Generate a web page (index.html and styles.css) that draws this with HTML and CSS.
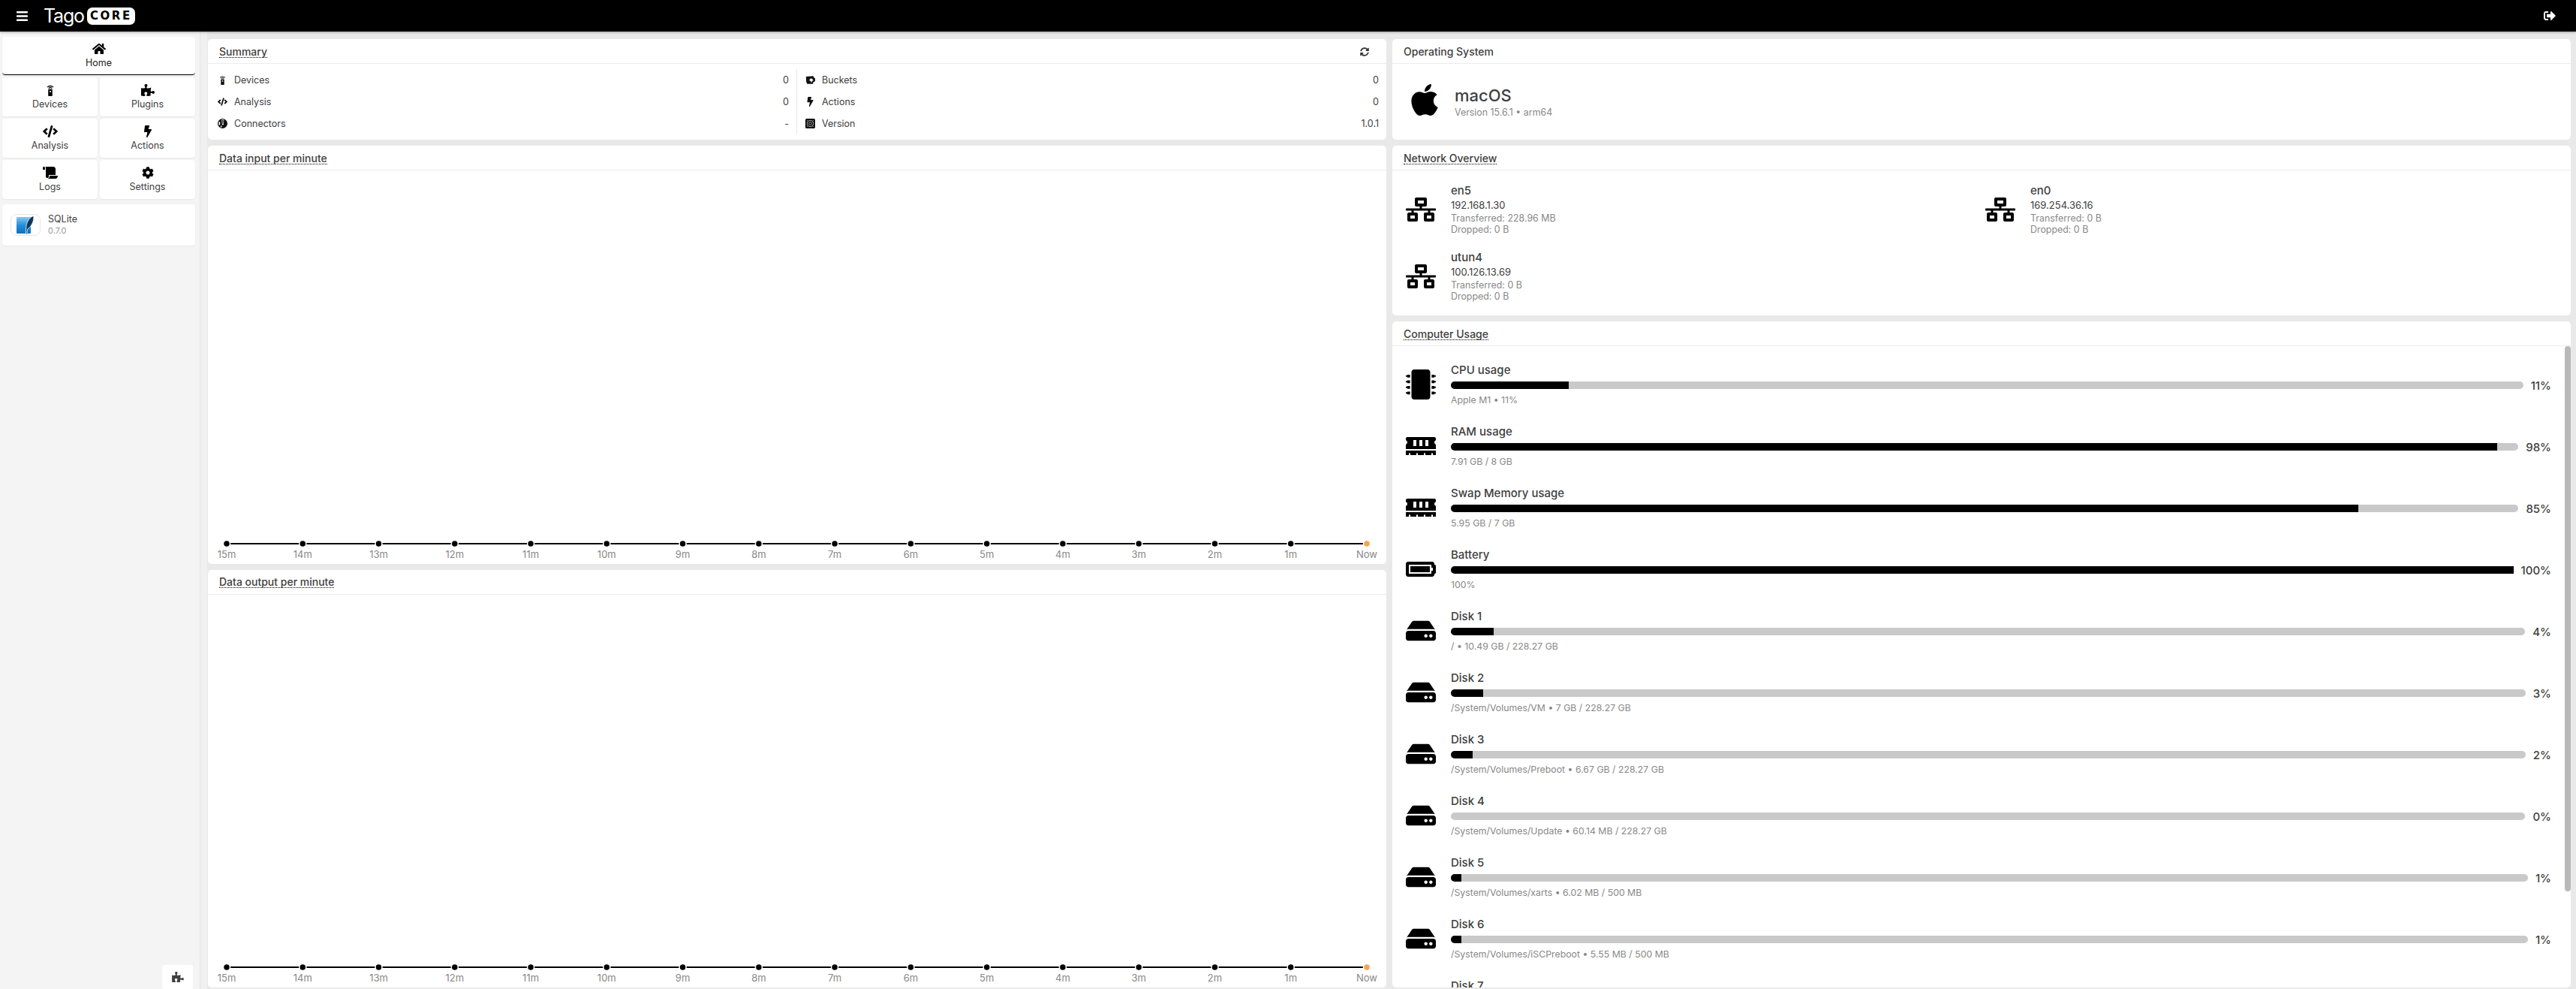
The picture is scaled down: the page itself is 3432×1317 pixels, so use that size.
FILE: index.html
```html
<!DOCTYPE html>
<html lang="en">
<head>
    <meta charset="UTF-8">
    <title>TagoCore</title>
    <link rel="stylesheet" href="styles.css">
</head>
<body>
    <!-- icon sprite -->
    <svg class="sprite" xmlns="http://www.w3.org/2000/svg">
        <symbol id="i-bars" viewBox="0 0 448 512"><path d="M16 132h416c8.837 0 16-7.163 16-16V76c0-8.837-7.163-16-16-16H16C7.163 60 0 67.163 0 76v40c0 8.837 7.163 16 16 16zm0 160h416c8.837 0 16-7.163 16-16v-40c0-8.837-7.163-16-16-16H16c-8.837 0-16 7.163-16 16v40c0 8.837 7.163 16 16 16zm0 160h416c8.837 0 16-7.163 16-16v-40c0-8.837-7.163-16-16-16H16c-8.837 0-16 7.163-16 16v40c0 8.837 7.163 16 16 16z"/></symbol>
        <symbol id="i-home" viewBox="0 0 576 512"><path d="M280.37 148.26L96 300.11V464a16 16 0 0 0 16 16l112.06-.29a16 16 0 0 0 15.92-16V368a16 16 0 0 1 16-16h64a16 16 0 0 1 16 16v95.64a16 16 0 0 0 16 16.05L464 480a16 16 0 0 0 16-16V300L295.67 148.26a12.19 12.19 0 0 0-15.3 0zM571.6 251.47L488 182.56V44.05a12 12 0 0 0-12-12h-56a12 12 0 0 0-12 12v72.61L318.47 43a48 48 0 0 0-61 0L4.34 251.47a12 12 0 0 0-1.6 16.9l25.5 31A12 12 0 0 0 45.15 301l235.22-193.74a12.19 12.19 0 0 1 15.3 0L530.9 301a12 12 0 0 0 16.9-1.6l25.5-31a12 12 0 0 0-1.7-16.93z"/></symbol>
        <symbol id="i-code" viewBox="0 0 640 512"><path d="M278.9 511.5l-61-17.7c-6.4-1.8-10-8.5-8.2-14.9L346.2 8.7c1.8-6.4 8.5-10 14.9-8.2l61 17.7c6.4 1.8 10 8.5 8.2 14.9L293.8 503.3c-1.9 6.4-8.5 10.1-14.9 8.2zm-114-112.2l43.5-46.4c4.6-4.9 4.3-12.7-.8-17.2L117 256l90.6-79.7c5.1-4.5 5.5-12.3.8-17.2l-43.5-46.4c-4.5-4.8-12.1-5.1-17-.5L3.8 247.2c-5.1 4.7-5.1 12.8 0 17.5l144.1 135.1c4.9 4.6 12.5 4.4 17-.5zm327.2.6l144.1-135.1c5.1-4.7 5.1-12.8 0-17.5L492.1 112.1c-4.8-4.5-12.4-4.3-17 .5L431.6 159c-4.6 4.9-4.3 12.7.8 17.2L523 256l-90.6 79.7c-5.1 4.5-5.5 12.3-.8 17.2l43.5 46.4c4.5 4.9 12.1 5.1 17 .6z"/></symbol>
        <symbol id="i-bolt" viewBox="0 0 320 512"><path d="M296 160H180.6l42.6-129.8C227.2 15 215.7 0 200 0H56C44 0 33.8 8.9 32.2 20.8l-32 240C-1.7 275.2 9.5 288 24 288h118.7L96.6 482.5c-3.6 15.2 8 29.5 23.3 29.5 8.4 0 16.4-4.4 20.8-12l176-304c9.3-15.9-2.2-36-20.7-36z"/></symbol>
        <symbol id="i-cog" viewBox="0 0 512 512"><path d="M487.4 315.7l-42.6-24.6c4.3-23.2 4.3-47 0-70.2l42.6-24.6c4.9-2.8 7.1-8.6 5.5-14-11.1-35.6-30-67.8-54.7-94.6-3.8-4.1-10-5.1-14.8-2.3L380.8 110c-17.9-15.4-38.5-27.3-60.8-35.1V25.8c0-5.6-3.9-10.5-9.4-11.7-36.7-8.2-74.3-7.8-109.2 0-5.5 1.2-9.4 6.1-9.4 11.7V75c-22.2 7.9-42.8 19.8-60.8 35.1L88.7 85.5c-4.9-2.8-11-1.9-14.8 2.3-24.7 26.7-43.6 58.9-54.7 94.6-1.7 5.4.6 11.2 5.5 14L67.3 221c-4.3 23.2-4.3 47 0 70.2l-42.6 24.6c-4.9 2.8-7.1 8.6-5.5 14 11.1 35.6 30 67.8 54.7 94.6 3.8 4.1 10 5.1 14.8 2.3l42.6-24.6c17.9 15.4 38.5 27.3 60.8 35.1v49.2c0 5.6 3.9 10.5 9.4 11.7 36.7 8.2 74.3 7.8 109.2 0 5.5-1.2 9.4-6.1 9.4-11.7v-49.2c22.2-7.9 42.8-19.8 60.8-35.1l42.6 24.6c4.9 2.8 11 1.9 14.8-2.3 24.7-26.7 43.6-58.9 54.7-94.6 1.5-5.5-.7-11.3-5.6-14.1zM256 336c-44.1 0-80-35.9-80-80s35.9-80 80-80 80 35.9 80 80-35.9 80-80 80z"/></symbol>
        <symbol id="i-puzzle" viewBox="0 0 576 512"><path d="M519.442 288.651c-41.519 0-59.5 31.593-82.058 31.593C377.409 320.244 432 144 432 144s-196.288 80-196.288-3.297c0-35.827 36.288-46.25 36.288-85.985C272 19.216 243.885 0 210.539 0c-34.654 0-66.366 18.891-66.366 56.346 0 41.364 31.711 59.277 31.711 81.75C175.885 207.719 0 166.758 0 166.758v333.237s178.635 41.047 178.635-28.662c0-22.473-40-40.107-40-81.471 0-37.456 29.25-56.346 63.577-56.346 33.673 0 61.788 19.216 61.788 54.717 0 39.735-36.288 50.158-36.288 85.985 0 60.803 129.675 25.73 181.23 25.73 0 0-34.725-120.101 25.827-120.101 35.962 0 46.423 36.152 86.308 36.152C556.712 416 576 387.99 576 354.443c0-34.199-18.962-65.792-56.558-65.792z"/></symbol>
        <symbol id="i-scroll" viewBox="0 0 640 512"><path d="M48 0C21.53 0 0 21.53 0 48v64c0 8.84 7.16 16 16 16h80V48C96 21.53 74.47 0 48 0zm208 412.57V352h288V96c0-52.94-43.06-96-96-96H111.59C121.74 13.41 128 29.92 128 48v368c0 38.87 34.65 69.65 74.75 63.12C234.22 474 256 444.46 256 412.57zM288 384v32c0 52.93-43.06 96-96 96h336c61.86 0 112-50.14 112-112 0-8.84-7.16-16-16-16H288z"/></symbol>
        <symbol id="i-network" viewBox="0 0 640 512"><path d="M640 264v-16c0-8.84-7.16-16-16-16H344v-40h72c17.67 0 32-14.33 32-32V32c0-17.67-14.33-32-32-32H224c-17.67 0-32 14.33-32 32v128c0 17.67 14.33 32 32 32h72v40H16c-8.84 0-16 7.16-16 16v16c0 8.84 7.16 16 16 16h104v40H64c-17.67 0-32 14.33-32 32v128c0 17.67 14.33 32 32 32h160c17.67 0 32-14.33 32-32V352c0-17.67-14.33-32-32-32h-56v-40h304v40h-56c-17.67 0-32 14.33-32 32v128c0 17.67 14.33 32 32 32h160c17.67 0 32-14.33 32-32V352c0-17.67-14.33-32-32-32h-56v-40h104c8.84 0 16-7.16 16-16zM256 128V64h128v64H256zm-64 320H96v-64h96v64zm352 0h-96v-64h96v64z"/></symbol>
        <symbol id="i-chip" viewBox="0 0 512 512"><path d="M416 48v416c0 26.51-21.49 48-48 48H144c-26.51 0-48-21.49-48-48V48c0-26.51 21.49-48 48-48h224c26.51 0 48 21.49 48 48zm96 58v12a6 6 0 0 1-6 6h-18v6a6 6 0 0 1-6 6h-42V88h42a6 6 0 0 1 6 6v6h18a6 6 0 0 1 6 6zm0 96v12a6 6 0 0 1-6 6h-18v6a6 6 0 0 1-6 6h-42v-48h42a6 6 0 0 1 6 6v6h18a6 6 0 0 1 6 6zm0 96v12a6 6 0 0 1-6 6h-18v6a6 6 0 0 1-6 6h-42v-48h42a6 6 0 0 1 6 6v6h18a6 6 0 0 1 6 6zm0 96v12a6 6 0 0 1-6 6h-18v6a6 6 0 0 1-6 6h-42v-48h42a6 6 0 0 1 6 6v6h18a6 6 0 0 1 6 6zM30 376h42v48H30a6 6 0 0 1-6-6v-6H6a6 6 0 0 1-6-6v-12a6 6 0 0 1 6-6h18v-6a6 6 0 0 1 6-6zm0-96h42v48H30a6 6 0 0 1-6-6v-6H6a6 6 0 0 1-6-6v-12a6 6 0 0 1 6-6h18v-6a6 6 0 0 1 6-6zm0-96h42v48H30a6 6 0 0 1-6-6v-6H6a6 6 0 0 1-6-6v-12a6 6 0 0 1 6-6h18v-6a6 6 0 0 1 6-6zm0-96h42v48H30a6 6 0 0 1-6-6v-6H6a6 6 0 0 1-6-6v-12a6 6 0 0 1 6-6h18v-6a6 6 0 0 1 6-6z"/></symbol>
        <symbol id="i-memory" viewBox="0 0 640 512"><path d="M640 130.94V96c0-17.67-14.33-32-32-32H32C14.33 64 0 78.33 0 96v34.94c18.6 6.61 32 24.19 32 45.06s-13.4 38.45-32 45.06V320h640v-98.94c-18.6-6.61-32-24.19-32-45.06s13.4-38.45 32-45.06zM224 256h-64V128h64v128zm128 0h-64V128h64v128zm128 0h-64V128h64v128zM0 448h64v-26.67c0-8.84 7.16-16 16-16s16 7.16 16 16V448h128v-26.67c0-8.84 7.16-16 16-16s16 7.16 16 16V448h128v-26.67c0-8.84 7.16-16 16-16s16 7.16 16 16V448h128v-26.67c0-8.84 7.16-16 16-16s16 7.16 16 16V448h64v-96H0v96z"/></symbol>
        <symbol id="i-battery" viewBox="0 0 640 512"><path d="M544 160v64h32v64h-32v64H64V160h480m16-64H48c-26.51 0-48 21.49-48 48v224c0 26.51 21.49 48 48 48h512c26.51 0 48-21.49 48-48v-16h8c13.255 0 24-10.745 24-24V184c0-13.255-10.745-24-24-24h-8v-16c0-26.51-21.49-48-48-48zm-48 96H96v128h416V192z"/></symbol>
        <symbol id="i-hdd" viewBox="0 0 576 512"><path d="M576 304v96c0 26.51-21.49 48-48 48H48c-26.51 0-48-21.49-48-48v-96c0-26.51 21.49-48 48-48h480c26.51 0 48 21.49 48 48zm-48-80a79.557 79.557 0 0 1 30.777 6.165L462.25 85.374A48.003 48.003 0 0 0 422.311 64H153.689a48 48 0 0 0-39.938 21.374L17.223 230.165A79.557 79.557 0 0 1 48 224h480zm-48 96c-17.673 0-32 14.327-32 32s14.327 32 32 32 32-14.327 32-32-14.327-32-32-32zm-96 0c-17.673 0-32 14.327-32 32s14.327 32 32 32 32-14.327 32-32-14.327-32-32-32z"/></symbol>
        <symbol id="i-logout" viewBox="0 0 512 512"><path d="M497 273L329 441c-15 15-41 4.5-41-17v-96H152c-13.3 0-24-10.7-24-24v-96c0-13.3 10.7-24 24-24h136V88c0-21.4 25.9-32 41-17l168 168c9.3 9.4 9.3 24.6 0 34zM192 436v-40c0-6.6-5.4-12-12-12H96c-17.7 0-32-14.3-32-32V160c0-17.7 14.3-32 32-32h84c6.6 0 12-5.4 12-12V76c0-6.6-5.4-12-12-12H96c-53 0-96 43-96 96v192c0 53 43 96 96 96h84c6.6 0 12-5.4 12-12z"/></symbol>
        <symbol id="i-sync" viewBox="0 0 512 512"><path d="M370.72 133.28C339.458 104.008 298.888 87.962 255.848 88c-77.458.068-144.328 53.178-162.791 126.85-1.344 5.363-6.122 9.15-11.651 9.15H24.103c-7.498 0-13.194-6.807-11.807-14.176C33.933 94.924 134.813 8 256 8c66.448 0 126.791 26.136 171.315 68.685L463.03 40.97C478.149 25.851 504 36.559 504 57.941V192c0 13.255-10.745 24-24 24H345.941c-21.382 0-32.09-25.851-16.971-40.971l41.75-41.749zM32 296h134.059c21.382 0 32.09 25.851 16.971 40.971l-41.75 41.75c31.262 29.273 71.835 45.319 114.876 45.28 77.418-.07 144.315-53.144 162.787-126.849 1.344-5.363 6.122-9.15 11.651-9.15h57.304c7.498 0 13.194 6.807 11.807 14.176C478.067 417.076 377.187 504 256 504c-66.448 0-126.791-26.136-171.315-68.685L48.97 471.03C33.851 486.149 8 475.441 8 454.059V320c0-13.255 10.745-24 24-24z"/></symbol>
        <symbol id="i-apple" viewBox="0 0 384 512"><path d="M318.7 268.7c-.2-36.7 16.4-64.4 50-84.8-18.8-26.9-47.2-41.7-84.7-44.6-35.5-2.8-74.3 20.7-88.5 20.7-15 0-49.4-19.7-76.4-19.7C63.3 141.2 4 184.8 4 273.5q0 39.3 14.4 81.2c12.8 36.7 59 126.7 107.2 125.2 25.2-.6 43-17.9 75.8-17.9 31.8 0 48.3 17.9 76.4 17.9 48.6-.7 90.4-82.5 102.6-119.3-65.2-30.7-61.7-90-61.7-91.9zm-56.6-164.2c27.3-32.4 24.8-61.9 24-72.5-24.1 1.4-52 16.4-67.9 34.9-17.5 19.8-27.8 44.3-25.6 71.9 26.1 2 49.9-11.4 69.5-34.3z"/></symbol>
        <symbol id="i-device" viewBox="0 0 12 18"><path d="M1 4.200a7 7 0 0 1 10 0L10 5.200a5.600 5.600 0 0 0-8 0zM3 6a4.200 4.200 0 0 1 6 0L8 7a2.800 2.800 0 0 0-4 0z"/><path fill-rule="evenodd" d="M3.600 7.600h4.800a.7.7 0 0 1 .7.7v8.900a.8.8 0 0 1-.8.8H3.700a.8.8 0 0 1-.8-.8V8.300a.7.7 0 0 1 .7-.7zM5 10v2h2v-2z"/></symbol>
        <symbol id="i-connector" viewBox="0 0 16 16"><path fill-rule="evenodd" d="M8 0a8 8 0 1 1 0 16A8 8 0 0 1 8 0zM2.500 4.500C1.500 6 1.300 9 2.500 11.500L4 9V6zM4.500 13.500 6 14.800l1-3-1.500-.5z"/><path fill="#fff" d="M6.500 1.500h3.800l-.8 8.500H7.300z"/><path d="M7.400 2.500h2l-.5 6H8z"/></symbol>
        <symbol id="i-bucket" viewBox="0 0 16 14"><path d="M1 1.500 13 .5l1 2.500 2 1.500V9l-3 1.500-.5 3H3l-1.500-3z"/><path fill="#fff" d="M7 6a3 3 0 0 1 5 0l1 2-2 .5-1 3-1.500-3L6.500 8z"/></symbol>
        <symbol id="i-version" viewBox="0 0 16 16"><rect width="16" height="16" rx="2"/><circle cx="8" cy="8" r="5" fill="none" stroke="#aaa" stroke-width="1.200"/><circle cx="8" cy="8" r="2.300" fill="none" stroke="#aaa" stroke-width="1"/><path stroke="#aaa" d="M2.500 2.500 5 5M13.500 2.500 11 5M2.500 13.500 5 11M13.500 13.500 11 11"/></symbol>
    </svg>

    <header class="topbar">
        <div class="brand">
            <svg class="menu-icon"><use href="#i-bars"/></svg>
            <div class="logo"><span class="logo-tago">Tago</span><span class="logo-core">CORE</span></div>
        </div>
        <svg class="logout-icon"><use href="#i-logout"/></svg>
    </header>

    <div class="layout">
        <aside class="sidebar">
            <nav class="nav">
                <a class="nav-item nav-home"><svg class="nav-icon"><use href="#i-home"/></svg>Home</a>
                <a class="nav-item"><svg class="nav-icon"><use href="#i-device"/></svg>Devices</a>
                <a class="nav-item"><svg class="nav-icon"><use href="#i-puzzle"/></svg>Plugins</a>
                <a class="nav-item"><svg class="nav-icon"><use href="#i-code"/></svg>Analysis</a>
                <a class="nav-item"><svg class="nav-icon"><use href="#i-bolt"/></svg>Actions</a>
                <a class="nav-item"><svg class="nav-icon"><use href="#i-scroll"/></svg>Logs</a>
                <a class="nav-item"><svg class="nav-icon"><use href="#i-cog"/></svg>Settings</a>
            </nav>
            <div class="db-card">
                <div class="db-logo">
                    <svg viewBox="0 0 30 26" width="30" height="26">
                        <defs>
                            <linearGradient id="sqlite-blue" x1="0" y1="0" x2="0" y2="1">
                                <stop offset="0" stop-color="#8cc8ee"/>
                                <stop offset="0.5" stop-color="#1f8fdc"/>
                                <stop offset="1" stop-color="#0f6fb8"/>
                            </linearGradient>
                        </defs>
                        <rect x="3" y="2" width="19" height="22" rx="1" fill="url(#sqlite-blue)"/>
                        <path fill="#0b3a5e" stroke="#fff" stroke-width="0.8" d="M26 0.500C21 1.500 17 7.500 16 13.500c-.6 4-.6 8-.4 12h1.400c0-3 .2-5 .7-7.500 3.500-2 6-6 7.500-10.500.6-2.500 1-5 .4-7.500z"/>
                    </svg>
                </div>
                <div>
                    <div class="db-name">SQLite</div>
                    <div class="db-version">0.7.0</div>
                </div>
            </div>
            <button class="plugin-btn"><svg><use href="#i-puzzle"/></svg></button>
        </aside>

        <main class="content">
            <div class="column">
                <section class="card">
                    <div class="card-header">
                        <h2 class="card-title tip">Summary</h2>
                        <svg class="refresh-icon"><use href="#i-sync"/></svg>
                    </div>
                    <div class="summary">
                        <div class="summary-col">
                            <div class="summary-row"><svg class="summary-icon"><use href="#i-device"/></svg><span class="summary-label">Devices</span><span>0</span></div>
                            <div class="summary-row"><svg class="summary-icon"><use href="#i-code"/></svg><span class="summary-label">Analysis</span><span>0</span></div>
                            <div class="summary-row"><svg class="summary-icon"><use href="#i-connector"/></svg><span class="summary-label">Connectors</span><span>-</span></div>
                        </div>
                        <div class="summary-col summary-right">
                            <div class="summary-row"><svg class="summary-icon"><use href="#i-bucket"/></svg><span class="summary-label">Buckets</span><span>0</span></div>
                            <div class="summary-row"><svg class="summary-icon"><use href="#i-bolt"/></svg><span class="summary-label">Actions</span><span>0</span></div>
                            <div class="summary-row"><svg class="summary-icon"><use href="#i-version"/></svg><span class="summary-label">Version</span><span>1.0.1</span></div>
                        </div>
                    </div>
                </section>

                <section class="card card-grow">
                    <div class="card-header"><h2 class="card-title tip">Data input per minute</h2></div>
                    <div class="chart">
                        <svg class="chart-svg" viewBox="0 0 1570 40">
                            <line class="chart-line" x1="25" y1="13" x2="1544" y2="13"/>
                            <g class="dots">
                                <circle cx="25" cy="13" r="4.500"/><circle cx="126.300" cy="13" r="4.500"/><circle cx="227.500" cy="13" r="4.500"/><circle cx="328.800" cy="13" r="4.500"/><circle cx="430.100" cy="13" r="4.500"/><circle cx="531.300" cy="13" r="4.500"/><circle cx="632.600" cy="13" r="4.500"/><circle cx="733.900" cy="13" r="4.500"/><circle cx="835.100" cy="13" r="4.500"/><circle cx="936.400" cy="13" r="4.500"/><circle cx="1037.700" cy="13" r="4.500"/><circle cx="1138.900" cy="13" r="4.500"/><circle cx="1240.200" cy="13" r="4.500"/><circle cx="1341.500" cy="13" r="4.500"/><circle cx="1442.700" cy="13" r="4.500"/><circle class="dot-now" cx="1544" cy="13" r="4.500"/>
                            </g>
                            <g class="ticks">
                                <text x="25" y="32">15m</text><text x="126.300" y="32">14m</text><text x="227.500" y="32">13m</text><text x="328.800" y="32">12m</text><text x="430.100" y="32">11m</text><text x="531.300" y="32">10m</text><text x="632.600" y="32">9m</text><text x="733.900" y="32">8m</text><text x="835.100" y="32">7m</text><text x="936.400" y="32">6m</text><text x="1037.700" y="32">5m</text><text x="1138.900" y="32">4m</text><text x="1240.200" y="32">3m</text><text x="1341.500" y="32">2m</text><text x="1442.700" y="32">1m</text><text x="1544" y="32">Now</text>
                            </g>
                        </svg>
                    </div>
                </section>

                <section class="card card-grow">
                    <div class="card-header"><h2 class="card-title tip">Data output per minute</h2></div>
                    <div class="chart">
                        <svg class="chart-svg" viewBox="0 0 1570 40">
                            <line class="chart-line" x1="25" y1="13" x2="1544" y2="13"/>
                            <g class="dots">
                                <circle cx="25" cy="13" r="4.500"/><circle cx="126.300" cy="13" r="4.500"/><circle cx="227.500" cy="13" r="4.500"/><circle cx="328.800" cy="13" r="4.500"/><circle cx="430.100" cy="13" r="4.500"/><circle cx="531.300" cy="13" r="4.500"/><circle cx="632.600" cy="13" r="4.500"/><circle cx="733.900" cy="13" r="4.500"/><circle cx="835.100" cy="13" r="4.500"/><circle cx="936.400" cy="13" r="4.500"/><circle cx="1037.700" cy="13" r="4.500"/><circle cx="1138.900" cy="13" r="4.500"/><circle cx="1240.200" cy="13" r="4.500"/><circle cx="1341.500" cy="13" r="4.500"/><circle cx="1442.700" cy="13" r="4.500"/><circle class="dot-now" cx="1544" cy="13" r="4.500"/>
                            </g>
                            <g class="ticks">
                                <text x="25" y="32">15m</text><text x="126.300" y="32">14m</text><text x="227.500" y="32">13m</text><text x="328.800" y="32">12m</text><text x="430.100" y="32">11m</text><text x="531.300" y="32">10m</text><text x="632.600" y="32">9m</text><text x="733.900" y="32">8m</text><text x="835.100" y="32">7m</text><text x="936.400" y="32">6m</text><text x="1037.700" y="32">5m</text><text x="1138.900" y="32">4m</text><text x="1240.200" y="32">3m</text><text x="1341.500" y="32">2m</text><text x="1442.700" y="32">1m</text><text x="1544" y="32">Now</text>
                            </g>
                        </svg>
                    </div>
                </section>
            </div>

            <div class="column">
                <section class="card">
                    <div class="card-header"><h2 class="card-title">Operating System</h2></div>
                    <div class="os">
                        <svg class="os-icon"><use href="#i-apple"/></svg>
                        <div>
                            <div class="os-name">macOS</div>
                            <div class="os-version">Version 15.6.1 • arm64</div>
                        </div>
                    </div>
                </section>

                <section class="card">
                    <div class="card-header"><h2 class="card-title tip">Network Overview</h2></div>
                    <div class="network">
                        <div class="net-item">
                            <svg class="row-icon"><use href="#i-network"/></svg>
                            <div>
                                <div class="net-name">en5</div>
                                <div class="net-ip">192.168.1.30</div>
                                <div class="net-info">Transferred: 228.96 MB</div>
                                <div class="net-info">Dropped: 0 B</div>
                            </div>
                        </div>
                        <div class="net-item">
                            <svg class="row-icon"><use href="#i-network"/></svg>
                            <div>
                                <div class="net-name">en0</div>
                                <div class="net-ip">169.254.36.16</div>
                                <div class="net-info">Transferred: 0 B</div>
                                <div class="net-info">Dropped: 0 B</div>
                            </div>
                        </div>
                        <div class="net-item">
                            <svg class="row-icon"><use href="#i-network"/></svg>
                            <div>
                                <div class="net-name">utun4</div>
                                <div class="net-ip">100.126.13.69</div>
                                <div class="net-info">Transferred: 0 B</div>
                                <div class="net-info">Dropped: 0 B</div>
                            </div>
                        </div>
                    </div>
                </section>

                <section class="card card-usage">
                    <div class="card-header"><h2 class="card-title tip">Computer Usage</h2></div>
                    <div class="usage">
                        <div class="usage-row">
                            <svg class="row-icon"><use href="#i-chip"/></svg>
                            <div class="usage-main">
                                <div class="usage-name">CPU usage</div>
                                <div class="usage-bar-row"><div class="bar"><div class="bar-fill" style="width: 11%"></div></div><span class="usage-pct">11%</span></div>
                                <div class="usage-sub">Apple M1 • 11%</div>
                            </div>
                        </div>
                        <div class="usage-row">
                            <svg class="row-icon"><use href="#i-memory"/></svg>
                            <div class="usage-main">
                                <div class="usage-name">RAM usage</div>
                                <div class="usage-bar-row"><div class="bar"><div class="bar-fill" style="width: 98%"></div></div><span class="usage-pct">98%</span></div>
                                <div class="usage-sub">7.91 GB / 8 GB</div>
                            </div>
                        </div>
                        <div class="usage-row">
                            <svg class="row-icon"><use href="#i-memory"/></svg>
                            <div class="usage-main">
                                <div class="usage-name">Swap Memory usage</div>
                                <div class="usage-bar-row"><div class="bar"><div class="bar-fill" style="width: 85%"></div></div><span class="usage-pct">85%</span></div>
                                <div class="usage-sub">5.95 GB / 7 GB</div>
                            </div>
                        </div>
                        <div class="usage-row">
                            <svg class="row-icon"><use href="#i-battery"/></svg>
                            <div class="usage-main">
                                <div class="usage-name">Battery</div>
                                <div class="usage-bar-row"><div class="bar"><div class="bar-fill" style="width: 100%"></div></div><span class="usage-pct">100%</span></div>
                                <div class="usage-sub">100%</div>
                            </div>
                        </div>
                        <div class="usage-row">
                            <svg class="row-icon"><use href="#i-hdd"/></svg>
                            <div class="usage-main">
                                <div class="usage-name">Disk 1</div>
                                <div class="usage-bar-row"><div class="bar"><div class="bar-fill" style="width: 4%"></div></div><span class="usage-pct">4%</span></div>
                                <div class="usage-sub">/ • 10.49 GB / 228.27 GB</div>
                            </div>
                        </div>
                        <div class="usage-row">
                            <svg class="row-icon"><use href="#i-hdd"/></svg>
                            <div class="usage-main">
                                <div class="usage-name">Disk 2</div>
                                <div class="usage-bar-row"><div class="bar"><div class="bar-fill" style="width: 3%"></div></div><span class="usage-pct">3%</span></div>
                                <div class="usage-sub">/System/Volumes/VM • 7 GB / 228.27 GB</div>
                            </div>
                        </div>
                        <div class="usage-row">
                            <svg class="row-icon"><use href="#i-hdd"/></svg>
                            <div class="usage-main">
                                <div class="usage-name">Disk 3</div>
                                <div class="usage-bar-row"><div class="bar"><div class="bar-fill" style="width: 2%"></div></div><span class="usage-pct">2%</span></div>
                                <div class="usage-sub">/System/Volumes/Preboot • 6.67 GB / 228.27 GB</div>
                            </div>
                        </div>
                        <div class="usage-row">
                            <svg class="row-icon"><use href="#i-hdd"/></svg>
                            <div class="usage-main">
                                <div class="usage-name">Disk 4</div>
                                <div class="usage-bar-row"><div class="bar"><div class="bar-fill" style="width: 0%"></div></div><span class="usage-pct">0%</span></div>
                                <div class="usage-sub">/System/Volumes/Update • 60.14 MB / 228.27 GB</div>
                            </div>
                        </div>
                        <div class="usage-row">
                            <svg class="row-icon"><use href="#i-hdd"/></svg>
                            <div class="usage-main">
                                <div class="usage-name">Disk 5</div>
                                <div class="usage-bar-row"><div class="bar"><div class="bar-fill" style="width: 1%"></div></div><span class="usage-pct">1%</span></div>
                                <div class="usage-sub">/System/Volumes/xarts • 6.02 MB / 500 MB</div>
                            </div>
                        </div>
                        <div class="usage-row">
                            <svg class="row-icon"><use href="#i-hdd"/></svg>
                            <div class="usage-main">
                                <div class="usage-name">Disk 6</div>
                                <div class="usage-bar-row"><div class="bar"><div class="bar-fill" style="width: 1%"></div></div><span class="usage-pct">1%</span></div>
                                <div class="usage-sub">/System/Volumes/iSCPreboot • 5.55 MB / 500 MB</div>
                            </div>
                        </div>
                        <div class="usage-row">
                            <svg class="row-icon"><use href="#i-hdd"/></svg>
                            <div class="usage-main">
                                <div class="usage-name">Disk 7</div>
                            </div>
                        </div>
                    </div>
                    <div class="scroll-thumb"></div>
                </section>
            </div>
        </main>
    </div>
</body>
</html>
```

FILE: styles.css
```css
* {
    box-sizing: border-box;
}

html,
body {
    height: 100%;
}

body {
    font-family: Inter, "Noto Sans", sans-serif;
    margin: 0;
    overflow: hidden;
    color: #404040;
    font-size: 13px;
    display: flex;
    flex-direction: column;
}

.sprite {
    display: none;
}

/* Top bar */
.topbar {
    height: 42px;
    flex: none;
    background-color: #000;
    color: #fff;
    display: flex;
    justify-content: space-between;
    align-items: center;
    padding: 0 27px 0 22px;
    box-shadow: 0 1px 3px rgba(0, 0, 0, 0.35);
    position: relative;
    z-index: 2;
}

.brand {
    display: flex;
    align-items: center;
    gap: 21px;
}

.menu-icon {
    width: 15px;
    height: 17px;
    fill: #fff;
}

.logo {
    display: flex;
    align-items: center;
    gap: 4px;
}

.logo-tago {
    font-size: 25px;
    font-weight: 400;
    line-height: 32px;
    letter-spacing: -1.2px;
}

.logo-core {
    background-color: #fff;
    color: #000;
    border-radius: 7px;
    width: 64px;
    height: 23px;
    font-family: "DejaVu Sans", sans-serif;
    font-weight: bold;
    font-size: 15px;
    letter-spacing: 2.5px;
    line-height: 23px;
    text-align: center;
}

.logout-icon {
    width: 16px;
    height: 16px;
    fill: #fff;
}

.layout {
    flex: 1;
    min-height: 0;
    display: flex;
}

/* Sidebar */
.sidebar {
    width: 267px;
    flex: none;
    background-color: #f4f4f4;
    border-right: 1px solid #e6e6e6;
    padding: 7px 6px 0 3px;
    position: relative;
}

.nav {
    display: grid;
    grid-template-columns: 1fr 1fr;
    gap: 3px;
}

.nav-item {
    background-color: #fff;
    border-radius: 4px;
    box-shadow: 0 1px 2px rgba(0, 0, 0, 0.06);
    height: 52px;
    display: flex;
    flex-direction: column;
    align-items: center;
    justify-content: center;
    gap: 3px;
    font-size: 12.5px;
    line-height: 16px;
}

.nav-home {
    grid-column: 1 / 3;
    height: 51px;
    border-bottom: 1px solid #000;
    color: #222;
}

.nav-icon {
    width: 20px;
    height: 16px;
    fill: #000;
}

.db-card {
    background-color: #fff;
    border-radius: 4px;
    box-shadow: 0 1px 2px rgba(0, 0, 0, 0.06);
    margin-top: 7px;
    height: 55px;
    padding: 0 11px;
    display: flex;
    align-items: center;
    gap: 10px;
}

.db-logo {
    width: 40px;
    height: 29px;
    border: 1px solid #e6e6e6;
    border-radius: 8px;
    display: flex;
    align-items: center;
    justify-content: center;
}

.db-name {
    font-size: 12.5px;
    line-height: 16px;
}

.db-version {
    font-size: 11px;
    line-height: 15px;
    color: #999;
}

.plugin-btn {
    position: absolute;
    right: 9px;
    bottom: 0;
    width: 41px;
    height: 32px;
    background-color: #fff;
    border: none;
    border-radius: 3px;
    padding: 0;
    display: flex;
    align-items: center;
    justify-content: center;
}

.plugin-btn svg {
    width: 16px;
    height: 14px;
    fill: #404040;
}

/* Main area */
.content {
    flex: 1;
    min-width: 0;
    background-color: #e9e9e9;
    border-left: 9px solid #f0f0f0;
    padding: 10px 7px 2px 1px;
    display: grid;
    grid-template-columns: 1fr 1fr;
    gap: 8px;
}

.column {
    display: flex;
    flex-direction: column;
    gap: 8px;
    min-height: 0;
    min-width: 0;
}

.card {
    background-color: #fff;
    border-radius: 5px;
    display: flex;
    flex-direction: column;
    min-height: 0;
}

.card-grow {
    flex: 1 1 0;
}

.card-usage {
    flex: 1 1 0;
    overflow: hidden;
    position: relative;
}

.card-header {
    height: 33px;
    flex: none;
    padding: 1px 15px 0;
    border-bottom: 1px solid #ececec;
    display: flex;
    justify-content: space-between;
    align-items: center;
}

.card-title {
    margin: 0;
    font-size: 14px;
    font-weight: 500;
    line-height: 18px;
}

.tip {
    border-bottom: 1px dotted #000;
    line-height: 15px;
}

.refresh-icon {
    width: 12px;
    height: 12px;
    fill: #333;
    margin-right: 8px;
}

/* Summary */
.summary {
    display: grid;
    grid-template-columns: 772px 1fr;
    padding: 7px 10px 8px 13px;
    height: 101px;
}

.summary-col {
    padding-right: 10px;
    border-right: 1px solid #e6e6e6;
}

.summary-right {
    padding: 0 0 0 11px;
    border-right: none;
}

.summary-row {
    height: 29px;
    display: flex;
    align-items: center;
    font-size: 12.5px;
}

.summary-icon {
    width: 13px;
    height: 13px;
    fill: #111;
    flex: none;
    margin-right: 9px;
}

.summary-label {
    flex: 1;
}

/* Charts */
.chart {
    flex: 1;
    display: flex;
    align-items: flex-end;
}

.chart-svg {
    display: block;
    width: 100%;
    height: 40px;
}

.chart-line {
    stroke: #000;
    stroke-width: 2;
}

.dots circle {
    fill: #000;
    stroke: #fff;
    stroke-width: 1.5;
}

.dots .dot-now {
    fill: #f4a44f;
}

.ticks text {
    font-family: Inter, sans-serif;
    font-size: 13px;
    fill: #888;
    text-anchor: middle;
}

/* Operating system */
.os {
    height: 101px;
    padding-left: 25px;
    display: flex;
    align-items: center;
    gap: 22px;
}

.os-icon {
    width: 36px;
    height: 48px;
    fill: #000;
    margin-bottom: 5px;
}

.os-name {
    font-size: 22px;
    line-height: 28px;
    font-weight: 500;
}

.os-version {
    font-size: 12.4px;
    line-height: 18px;
    color: #888;
}

/* Network */
.network {
    display: grid;
    grid-template-columns: 772px 1fr;
    row-gap: 20px;
    padding: 17px 18px 18px;
}

.net-item {
    display: flex;
    align-items: center;
    gap: 20px;
}

.row-icon {
    width: 40px;
    height: 40px;
    flex: none;
    fill: #000;
}

.net-name {
    font-size: 15px;
    font-weight: 500;
    line-height: 20px;
}

.net-ip {
    font-size: 13px;
    line-height: 19px;
}

.net-info {
    font-size: 12.4px;
    line-height: 15px;
    color: #888;
}

/* Usage list, scrolled back to the top */
.usage {
    flex: 1;
    min-height: 0;
    overflow: hidden;
    padding: 10px 26px 0 18px;
}

.scroll-thumb {
    position: absolute;
    top: 33px;
    right: 0;
    width: 8px;
    height: 726px;
    background-color: #b9b9b9;
    border-radius: 4px;
}

.usage-row {
    height: 82px;
    display: flex;
    align-items: center;
    gap: 20px;
}

.usage-main {
    flex: 1;
    min-width: 0;
    height: 62px;
}

.usage-name {
    font-size: 15px;
    font-weight: 500;
    line-height: 24px;
}

.usage-bar-row {
    display: flex;
    align-items: center;
    gap: 10px;
    height: 16px;
}

.bar {
    flex: 1;
    height: 10px;
    background-color: #c9c9c9;
    border-radius: 5px;
}

.bar-fill {
    height: 100%;
    background-color: #000;
    border-radius: 5px 0 0 5px;
}

.usage-pct {
    font-size: 15px;
    font-weight: 500;
}

.usage-sub {
    font-size: 12.3px;
    line-height: 20px;
    margin-top: 2px;
    color: #888;
}
```
